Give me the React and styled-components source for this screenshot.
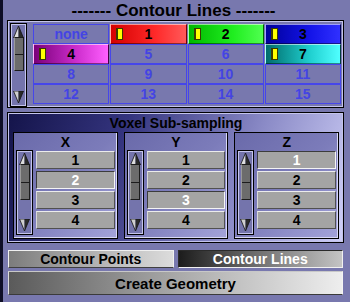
import React, { useState } from 'react';
import styled, { createGlobalStyle } from 'styled-components';

const GlobalStyle = createGlobalStyle`
  html, body {
    margin: 0;
    padding: 0;
    background: #7878ae;
  }
  * {
    box-sizing: border-box;
  }
`;

const Page = styled.div`
  width: 350px;
  height: 302px;
  background: #7878ae;
  border-left: 3px solid #0e0e26;
  padding: 0 6px 0 4px;
  font-family: 'Liberation Sans', Arial, sans-serif;
  font-weight: bold;
  overflow: hidden;
`;

const Title = styled.div`
  height: 20px;
  line-height: 22px;
  font-size: 17px;
  color: #000;
  text-align: center;
  margin-left: -4px;
  white-space: nowrap;
`;

const Frame = styled.div`
  border: 1px solid #000;
  box-shadow: inset 0 0 0 1px #c4c4ec;
`;

const ColorPanel = styled(Frame)`
  height: 88px;
  display: flex;
  padding: 2px 2px 0 2px;
  gap: 6px;
`;

const ScrollTrack = styled.div`
  width: 17px;
  height: ${(p) => p.$height}px;
  background: #7474ac;
  border: 1px solid #000;
  box-shadow: inset 0 0 0 1px #c4c4ec;
  display: flex;
  flex-direction: column;
  align-items: center;
  padding: 2px 0 3px;
  flex-shrink: 0;
`;

const Thumb = styled.div`
  width: 10px;
  height: ${(p) => p.$height}px;
  background: #6c6c6c;
  border: 1px solid #1c1c1c;
  border-left-color: #9a9a9a;
  display: flex;
  flex-direction: column;
`;

const ThumbHalf = styled.div`
  flex: 1;
  & + & {
    border-top: 1px solid #1c1c1c;
  }
`;

const Spacer = styled.div`
  flex: 1;
`;

const ColorGrid = styled.div`
  flex: 1;
  display: grid;
  grid-template-columns: repeat(4, 1fr);
  grid-auto-rows: 20px;
  column-gap: 1px;
  margin-top: 1px;
`;

const swatches = {
  red: 'linear-gradient(to right, #d40000, #ff2a2a 60%, #ff5a5a)',
  green: 'linear-gradient(to right, #00b800, #20ee20 60%, #50ff50)',
  blue: 'linear-gradient(to right, #00009c, #1414e8 60%, #3030ff)',
  magenta: 'linear-gradient(to right, #7a007a, #d030d0 60%, #ff60ff)',
  cyan: 'linear-gradient(to right, #006c6c, #20d0d0 60%, #50ffff)',
};

const Cell = styled.div`
  position: relative;
  display: flex;
  align-items: center;
  justify-content: center;
  font-size: 14px;
  color: ${(p) => (p.$color ? '#000' : '#4444e4')};
  background: ${(p) => (p.$color ? swatches[p.$color] : 'transparent')};
  border: 1px solid ${(p) => (p.$color ? 'rgba(255,255,255,0.55)' : '#4646ea')};
  border-right-color: ${(p) => (p.$color ? 'rgba(0,0,0,0.45)' : '#4646ea')};
  border-bottom-color: ${(p) => (p.$color ? 'rgba(0,0,0,0.45)' : '#4646ea')};
`;

const Marker = styled.span`
  position: absolute;
  left: 5px;
  top: 3px;
  width: 7px;
  height: 12px;
  background: #ffff00;
  border: 1px solid #3a3a00;
  border-left-width: 2px;
`;

const VoxelPanel = styled(Frame)`
  margin-top: 4px;
  height: 131px;
  background: linear-gradient(110deg, #14144a 0%, #34347e 32%, #8a8ac6 68%, #d0d0f8 100%);
  padding: 0 4px 3px 5px;
  display: flex;
  flex-direction: column;
`;

const VoxelTitle = styled.div`
  height: 19px;
  line-height: 21px;
  font-size: 14px;
  text-align: center;
  color: #000;
`;

const AxisRow = styled.div`
  flex: 1;
  display: flex;
  gap: 6px;
`;

const AxisPanel = styled.div`
  flex: 1;
  border: 1px solid #000;
  box-shadow: inset -1px -1px 0 #d8d8f4;
  background: linear-gradient(to bottom right, #6a6aaa, #7c7cba 50%, #a4a4da);
  padding: 0 2px;
  display: flex;
  flex-direction: column;
`;

const AxisLabel = styled.div`
  height: 17px;
  line-height: 18px;
  text-align: center;
  font-size: 14px;
  color: #000;
`;

const AxisBody = styled.div`
  display: flex;
  gap: 3px;
`;

const ValueList = styled.div`
  flex: 1;
  display: flex;
  flex-direction: column;
  gap: 2px;
  padding-top: 1px;
`;

const ValueButton = styled.div`
  height: 18px;
  display: flex;
  align-items: center;
  justify-content: center;
  font-size: 14px;
  background: #a4a4a4;
  color: ${(p) => (p.$active ? '#fff' : '#000')};
  border: 1px solid;
  border-color: ${(p) =>
    p.$active ? '#3c3c3c #f4f4f4 #f4f4f4 #3c3c3c' : '#ececec #505050 #505050 #d8d8d8'};
  cursor: pointer;
`;

const ModeRow = styled.div`
  margin-top: 7px;
  display: flex;
  gap: 4px;
  padding: 0 1px;
`;

const ModeButton = styled.div`
  flex: 1;
  height: 18px;
  display: flex;
  align-items: center;
  justify-content: center;
  font-size: 14px;
  color: ${(p) => (p.$active ? '#fff' : '#000')};
  background: ${(p) =>
    p.$active
      ? 'linear-gradient(to right, #1c1c1c, #6a6a6a 45%, #c4c4c4)'
      : 'linear-gradient(to right, #7c7c7c, #b0b0b0 50%, #dcdcdc)'};
  border: 1px solid;
  border-color: ${(p) =>
    p.$active ? '#2a2a2a #f0f0f0 #f0f0f0 #2a2a2a' : '#f0f0f0 #f0f0f0 #404040 #f0f0f0'};
  cursor: pointer;
`;

const CreateButton = styled.div`
  margin: 3px 1px 0;
  height: 24px;
  display: flex;
  align-items: center;
  justify-content: center;
  font-size: 15px;
  color: #000;
  background: linear-gradient(to right, #5a5a5a, #a8a8a8 50%, #eeeeee);
  border: 1px solid;
  border-color: #c8c8c8 #f4f4f4 #3a3a3a #dcdcdc;
  cursor: pointer;
`;

const UpArrow = () => (
  <svg width="11" height="12" viewBox="0 0 11 12">
    <polygon points="5.5,0 0.5,12 5.5,12" fill="#dcdcdc" />
    <polygon points="5.5,0 10.5,12 5.5,12" fill="#2a2a2a" />
    <polygon points="5.5,0 0.5,12 10.5,12" fill="none" stroke="#111" strokeWidth="0.8" />
  </svg>
);

const DownArrow = () => (
  <svg width="11" height="12" viewBox="0 0 11 12">
    <polygon points="0.5,0 5.5,12 5.5,0" fill="#cfcfcf" />
    <polygon points="10.5,0 5.5,12 5.5,0" fill="#2a2a2a" />
    <polygon points="0.5,0 10.5,0 5.5,12" fill="none" stroke="#111" strokeWidth="0.8" />
  </svg>
);

const ScrollBar = ({ height, thumb, gap }) => (
  <ScrollTrack $height={height}>
    <UpArrow />
    <Thumb $height={thumb} style={{ marginTop: gap }}>
      <ThumbHalf />
      <ThumbHalf />
    </Thumb>
    <Spacer />
    <DownArrow />
  </ScrollTrack>
);

const cells = [
  { label: 'none' },
  { label: '1', color: 'red' },
  { label: '2', color: 'green' },
  { label: '3', color: 'blue' },
  { label: '4', color: 'magenta' },
  { label: '5' },
  { label: '6' },
  { label: '7', color: 'cyan' },
  { label: '8' },
  { label: '9' },
  { label: '10' },
  { label: '11' },
  { label: '12' },
  { label: '13' },
  { label: '14' },
  { label: '15' },
];

const axes = [
  { name: 'X', initial: 2 },
  { name: 'Y', initial: 3 },
  { name: 'Z', initial: 1 },
];

const AxisBox = ({ name, initial }) => {
  const [value, setValue] = useState(initial);
  return (
    <AxisPanel>
      <AxisLabel>{name}</AxisLabel>
      <AxisBody>
        <ScrollBar height={85} thumb={36} gap={-1} />
        <ValueList>
          {[1, 2, 3, 4].map((n) => (
            <ValueButton key={n} $active={value === n} onClick={() => setValue(n)}>
              {n}
            </ValueButton>
          ))}
        </ValueList>
      </AxisBody>
    </AxisPanel>
  );
};

const App = () => {
  const [mode, setMode] = useState('lines');

  return (
    <Page>
      <GlobalStyle />
      <Title>------- Contour Lines -------</Title>
      <ColorPanel>
        <ScrollBar height={84} thumb={34} gap={-1} />
        <ColorGrid>
          {cells.map((c) => (
            <Cell key={c.label} $color={c.color}>
              {c.color && <Marker />}
              {c.label}
            </Cell>
          ))}
        </ColorGrid>
      </ColorPanel>
      <VoxelPanel>
        <VoxelTitle>Voxel Sub-sampling</VoxelTitle>
        <AxisRow>
          {axes.map((a) => (
            <AxisBox key={a.name} name={a.name} initial={a.initial} />
          ))}
        </AxisRow>
      </VoxelPanel>
      <ModeRow>
        <ModeButton $active={mode === 'points'} onClick={() => setMode('points')}>
          Contour Points
        </ModeButton>
        <ModeButton $active={mode === 'lines'} onClick={() => setMode('lines')}>
          Contour Lines
        </ModeButton>
      </ModeRow>
      <CreateButton>Create Geometry</CreateButton>
    </Page>
  );
};

export default App;
